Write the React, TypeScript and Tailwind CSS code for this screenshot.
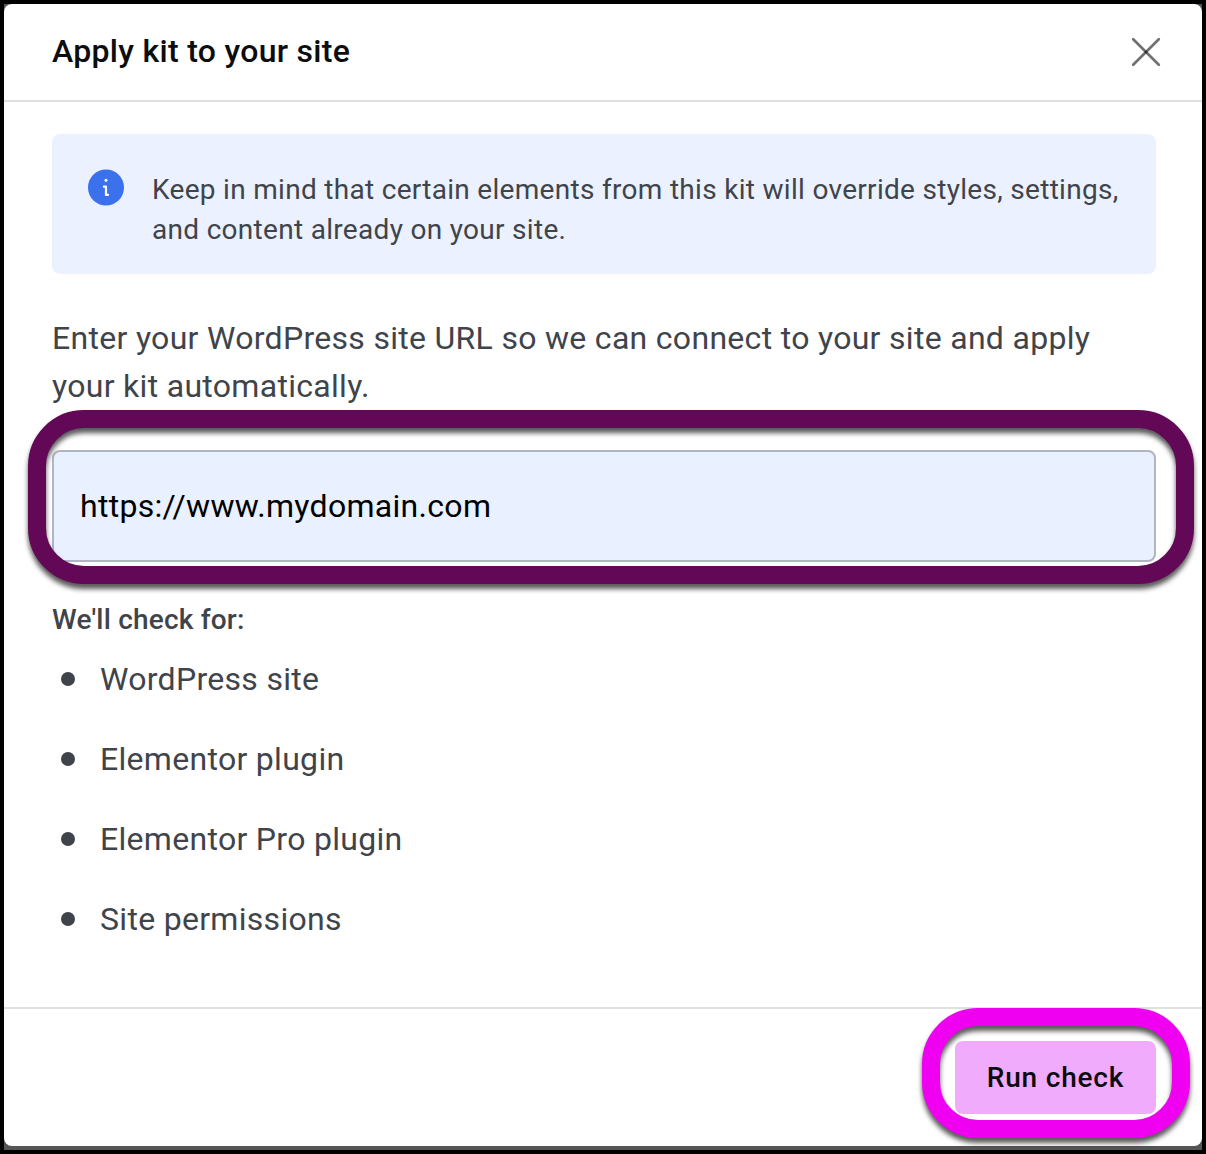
const checks = [
  'WordPress site',
  'Elementor plugin',
  'Elementor Pro plugin',
  'Site permissions',
];

function InfoIcon() {
  return (
    <svg className="mt-[35px] flex-none" width="36" height="37" viewBox="0 0 36 37" fill="none">
      <circle cx="18" cy="18.5" r="18" fill="#3b71ec" />
      <circle cx="18" cy="11.3" r="1.5" fill="#fff" />
      <path d="M15.9 17.7H18V25.5M17.8 25.8H20.1" stroke="#fff" strokeWidth="2.2" strokeLinecap="round" strokeLinejoin="round" />
    </svg>
  );
}

function CloseIcon() {
  return (
    <svg width="30" height="30" viewBox="0 0 30 30" stroke="#000" strokeOpacity="0.56" strokeWidth="2.7" strokeLinecap="round">
      <line x1="2.2" y1="2.2" x2="27.8" y2="27.8" />
      <line x1="27.8" y1="2.2" x2="2.2" y2="27.8" />
    </svg>
  );
}

export default function App() {
  return (
    <div className="w-[1206px] h-[1154px] border-4 border-black bg-[#555555] overflow-hidden font-['Roboto',sans-serif] text-[#3f444b]">
      <div className="flex flex-col h-[1142px] w-full bg-white rounded-lg">
        {/* Header */}
        <div className="flex-none flex items-center justify-between h-[98px] pl-12 pr-[41px] border-b-2 border-[#e0e0e0]">
          <h1 className="pb-0.5 text-[32px] leading-[48px] font-medium tracking-[0.3px] text-[#0c0d0e]">Apply kit to your site</h1>
          <button type="button" aria-label="Close">
            <CloseIcon />
          </button>
        </div>

        {/* Body */}
        <div className="flex-1 min-h-0 px-12 pt-8 pr-[46px]">
          <div className="flex gap-7 h-[140px] pl-9 rounded-lg bg-[#ebf1fe]">
            <InfoIcon />
            <p className="pt-9 text-[28px] leading-10 tracking-[0.3px] whitespace-nowrap">
              Keep in mind that certain elements from this kit will override styles, settings,<br />
              and content already on your site.
            </p>
          </div>

          <p className="mt-10 text-[32px] leading-[48px] tracking-[0.3px] whitespace-nowrap">
            Enter your WordPress site URL so we can connect to your site and apply<br />
            your kit automatically.
          </p>

          <div className="relative mt-10">
            <input
              className="block w-full h-28 px-[26px] rounded-lg border-2 border-[#b0b5c3] bg-[#e9f0ff] text-[32px] tracking-[0.3px] text-black outline-none"
              defaultValue="https://www.mydomain.com"
            />
            <div className="absolute -left-6 -top-10 w-[1166px] h-[174px] rounded-[56px] border-[18px] border-[#620856] drop-shadow-[0_5px_2.5px_rgba(0,0,0,0.65)] pointer-events-none" />
          </div>

          <h2 className="mt-[38px] text-[28px] leading-10 font-medium tracking-[0.2px]">We'll check for:</h2>
          <ul className="mt-[15px] flex flex-col gap-8">
            {checks.map((check) => (
              <li key={check} className="flex items-center gap-[25px] h-12 pl-[9px]">
                <span className="w-3.5 h-3.5 rounded-full bg-[#3f444b]" />
                <span className="text-[32px] leading-[48px] tracking-[0.3px]">{check}</span>
              </li>
            ))}
          </ul>
        </div>

        {/* Footer */}
        <div className="flex-none flex justify-end h-[139px] pt-8 pr-[46px] border-t-2 border-[#e0e0e0]">
          <div className="relative w-[201px] h-[73px]">
            <button type="button" className="w-full h-full rounded-lg bg-[#f0abfc] text-[28px] font-medium tracking-[0.8px] text-[#0c0d0e]">
              Run check
            </button>
            <div className="absolute -left-[33px] -top-[33px] w-[268px] h-[130px] rounded-[56px] border-[18px] border-[#f000f0] drop-shadow-[0_5px_2.5px_rgba(0,0,0,0.65)] pointer-events-none" />
          </div>
        </div>
      </div>
    </div>
  );
}
